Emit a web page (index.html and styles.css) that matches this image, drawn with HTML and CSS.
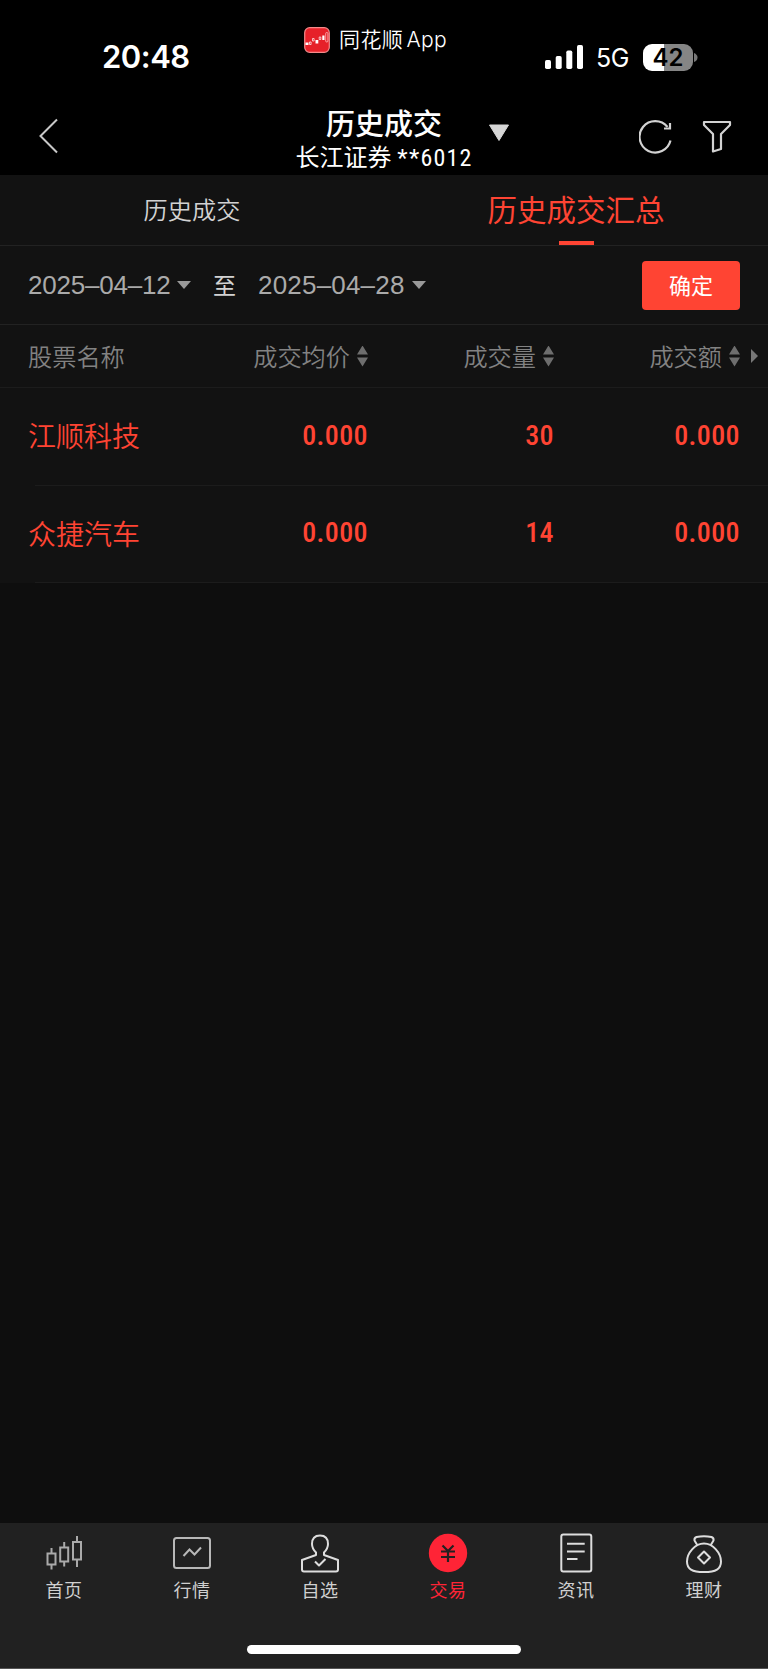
FILE: index.html
```html
<!DOCTYPE html>
<html lang="zh-CN">
<head>
    <meta charset="UTF-8" />
    <meta name="viewport" content="width=device-width, initial-scale=1.0" />
    <title>历史成交汇总</title>
    <link rel="stylesheet" href="styles.css">
</head>
<body>
    <header>
        <div class="status-bar">
            <div class="time">20:48</div>
            <div class="source-app">
                <svg class="app-logo" width="26" height="26" viewBox="0 0 26 26">
                    <rect x="0.7" y="0.7" width="24.6" height="24.6" rx="5" fill="#e62129" stroke="#f58a8a" stroke-width="1.2"/>
                    <path d="M1.5 15.5h3v2.500h-3zM11.500 13h2.800v3.500h-2.800zM18.300 8.500h2.200v4.500h-2.200z" fill="#fff"/>
                    <path d="M5.500 15h1.600v2.500h-1.600zM8.500 11.500h1.600v2.500h-1.600zM15.200 10h1.600v2.500h-1.600z" fill="none" stroke="#fff" stroke-width="0.7"/>
                    <rect x="21.700" y="5.500" width="2.200" height="9.500" rx="1" fill="none" stroke="#ffd0d0" stroke-width="0.7"/>
                </svg>
                <span>同花顺 App</span>
            </div>
            <div class="signals">
                <svg width="38" height="24" viewBox="0 0 38 24" fill="#fff">
                    <rect x="0" y="15" width="6" height="9" rx="1.700"/>
                    <rect x="10.700" y="11" width="6" height="13" rx="1.700"/>
                    <rect x="21.300" y="5.500" width="6" height="18.500" rx="1.700"/>
                    <rect x="32" y="0" width="6" height="24" rx="1.700"/>
                </svg>
                <span class="network">5G</span>
                <div class="battery"><span>42</span></div>
                <svg class="battery-cap" width="4" height="9" viewBox="0 0 4 9"><path d="M0 0Q3.500 1.500 3.500 4.500T0 9z" fill="#777"/></svg>
            </div>
        </div>
        <div class="nav-bar">
            <svg class="back" width="20" height="36" viewBox="0 0 20 36"><path d="M18 1.500L1.500 18L18 34.500" fill="none" stroke="#c8c8c8" stroke-width="2"/></svg>
            <div class="title">
                <h1>历史成交</h1>
                <div class="account">长江证券 <span>**6012</span></div>
            </div>
            <svg class="title-arrow" width="22" height="18" viewBox="0 0 22 18"><path d="M1.500 1h19L11 16.500z" fill="#d6d6d6" stroke="#d6d6d6" stroke-linejoin="round"/></svg>
            <svg class="refresh" width="34" height="36" viewBox="0 0 34 36" fill="none" stroke="#d2d2d2" stroke-width="2.200">
                <path d="M31.500 21.500A15.700 15.700 0 1 1 28.500 8"/>
                <path d="M31 4V9.500H25"/>
            </svg>
            <svg class="filter" width="30" height="34" viewBox="0 0 30 34"><path d="M2 2H28V5L19 14V29L11 31.500V14L2 5Z" fill="none" stroke="#d2d2d2" stroke-width="2.200" stroke-linejoin="round"/></svg>
        </div>
    </header>

    <main>
        <nav class="tabs">
            <a class="tab">历史成交</a>
            <a class="tab active">历史成交汇总</a>
        </nav>

        <div class="date-bar">
            <span class="date">2025–04–12</span>
            <i class="caret"></i>
            <span class="to">至</span>
            <span class="date">2025–04–28</span>
            <i class="caret"></i>
            <button>确定</button>
        </div>

        <div class="row table-head">
            <div class="name">股票名称</div>
            <div class="cell"><span>成交均价</span><i class="sort"></i></div>
            <div class="cell"><span>成交量</span><i class="sort"></i></div>
            <div class="cell"><span>成交额</span><i class="sort"></i></div>
            <i class="more"></i>
        </div>
        <div class="row stock">
            <div class="name">江顺科技</div>
            <div class="cell">0.000</div>
            <div class="cell">30</div>
            <div class="cell">0.000</div>
        </div>
        <div class="row stock">
            <div class="name">众捷汽车</div>
            <div class="cell">0.000</div>
            <div class="cell">14</div>
            <div class="cell">0.000</div>
        </div>
    </main>

    <footer>
        <div class="tab-bar">
            <a>
                <svg width="40" height="40" viewBox="0 0 40 40" fill="none" stroke="#aaa" stroke-width="2">
                    <path d="M3.500 20.500h8v11h-8zM7.500 15v5.500M7.500 31.500v5M16.200 14.500h8v14h-8zM20.200 9v5.500M20.200 28.500v5M29 9h8v17.500h-8zM33 3v6M33 26.500V34"/>
                </svg>
                <span>首页</span>
            </a>
            <a>
                <svg width="40" height="40" viewBox="0 0 40 40" fill="none" stroke="#b8b8b8" stroke-width="2">
                    <rect x="2" y="5" width="36" height="30" rx="2.500"/>
                    <path d="M11.500 23L17.500 16.500L22.500 21.500L29 14.500"/>
                </svg>
                <span>行情</span>
            </a>
            <a>
                <svg width="40" height="40" viewBox="0 0 40 40" fill="none" stroke="#ddd" stroke-width="2" stroke-linejoin="round">
                    <path d="M16 22V19.500C13.500 17 12 14 12 11C12 5.500 15 2.500 20 2.500S28 5.500 28 11C28 14 26.500 17 24 19.500V22L38 27V36.500Q38 38.500 36 38.500H4Q2 38.500 2 36.500V27Z"/>
                    <path d="M15 28.500L19 32.500L25.500 26"/>
                </svg>
                <span>自选</span>
            </a>
            <a class="active">
                <svg width="40" height="40" viewBox="0 0 40 40" fill="none">
                    <circle cx="20" cy="20" r="19.200" fill="#ff2436"/>
                    <path d="M14.500 12.500L20 18L25.500 12.500M20 18V29M13 18.500H27M13 24H27" stroke="#242021" stroke-width="2.200"/>
                </svg>
                <span>交易</span>
            </a>
            <a>
                <svg width="40" height="40" viewBox="0 0 40 40" fill="none" stroke="#ddd" stroke-width="2">
                    <rect x="5.300" y="1.500" width="30" height="37" rx="2"/>
                    <path d="M11 10.800H28.700M11 18.500H28.700M11 26H21.500"/>
                </svg>
                <span>资讯</span>
            </a>
            <a>
                <svg width="40" height="40" viewBox="0 0 40 40" fill="none" stroke="#ddd" stroke-width="2" stroke-linejoin="round">
                    <path d="M13.500 12.500L10.500 7.500Q10 5 12.500 4Q20 2.500 27.500 4Q30 5 29.500 7.500L26.500 12.500"/>
                    <path d="M20 10.500C11 10.500 3 20 3 28.500C3 36 8 39 20 39S37 36 37 28.500C37 20 29 10.500 20 10.500Z"/>
                    <path d="M20 18.500L26 24.500L20 30.500L14 24.500Z"/>
                </svg>
                <span>理财</span>
            </a>
        </div>
        <div class="home-indicator"></div>
    </footer>
</body>
</html>
```

FILE: styles.css
```css
* {
    box-sizing: border-box;
}

body {
    margin: 0;
    height: 1669px;
    display: flex;
    flex-direction: column;
    background-color: #0e0e0e;
    color: #d2d2d2;
    font-family: Inter, "Noto Sans CJK SC", sans-serif;
}

svg {
    display: block;
    flex: none;
}

header {
    height: 175px;
    background-color: #000;
    color: #fff;
}

/* Status bar */
.status-bar {
    display: flex;
    align-items: flex-start;
    height: 100px;
}

.time {
    width: 202px;
    margin-left: 102px;
    padding-top: 37px;
    font-size: 31px;
    line-height: 40px;
    font-weight: 600;
    letter-spacing: -0.5px;
}

.source-app {
    display: flex;
    align-items: center;
    width: 241px;
    padding-top: 26px;
    font-size: 21px;
    line-height: 28px;
    font-weight: 350;
    word-spacing: -3px;
    white-space: nowrap;
}

.source-app span {
    margin-left: 9px;
    letter-spacing: 0.4px;
}

.signals {
    display: flex;
    align-items: center;
    padding-top: 43px;
}

.network {
    width: 34px;
    margin: 2px 13px 0 13px;
    font-size: 25px;
    line-height: 26px;
    letter-spacing: -0.5px;
}

.battery {
    width: 50px;
    height: 27px;
    border-radius: 9px;
    background: linear-gradient(90deg, #fff 42%, #858585 42%);
    color: #000;
    font-size: 24px;
    line-height: 27px;
    font-weight: 600;
    text-align: center;
}

.battery-cap {
    margin-left: 1px;
}

/* Navigation bar */
.nav-bar {
    display: flex;
    height: 75px;
}

.back {
    margin: 18px 0 0 39px;
}

.title {
    width: 190px;
    margin-left: 230px;
    text-align: center;
    font-family: Roboto, "Noto Sans CJK SC", sans-serif;
}

h1 {
    margin: 7px 0 0;
    font-size: 29px;
    line-height: 36px;
    font-weight: 500;
}

.account {
    font-size: 24px;
    line-height: 31px;
    white-space: nowrap;
}

.account span {
    font-stretch: 80%;
    letter-spacing: 1.2px;
}

.title-arrow {
    margin: 24px 0 0 9px;
}

.refresh {
    margin: 19px 0 0 129px;
}

.filter {
    margin: 20px 0 0 29px;
}

/* Top tabs */
main {
    flex: 1;
}

.tabs {
    display: flex;
    height: 71px;
    background-color: #121212;
    border-bottom: 1px solid #222;
}

.tab {
    flex: 1;
    display: flex;
    flex-direction: column;
    align-items: center;
    font-size: 24.2px;
    line-height: 72px;
    font-weight: 350;
}

.tab.active {
    color: #ff4433;
    font-size: 29.5px;
    line-height: 70px;
    font-weight: 400;
}

.tab.active::after {
    content: "";
    width: 35px;
    height: 4px;
    margin-top: -4px;
    background-color: #ff4433;
}

/* Date range */
.date-bar {
    display: flex;
    align-items: center;
    height: 79px;
    padding: 0 28px;
    background-color: #121212;
    border-bottom: 1px solid #222;
}

.date {
    color: #aaa;
    width: 142px;
    font-family: "Liberation Sans", sans-serif;
    font-size: 26px;
    line-height: 30px;
    letter-spacing: -0.2px;
    white-space: nowrap;
}

.to + .date {
    width: 147px;
    letter-spacing: 0.2px;
}

.caret {
    margin-left: 7px;
    border: 7px solid transparent;
    border-top: 8px solid #999;
    border-bottom: 0;
}

.to {
    margin: -2px 22px 0 22px;
    font-size: 23px;
}

button {
    width: 98px;
    height: 49px;
    margin-left: auto;
    padding: 0 0 2px;
    border: none;
    border-radius: 4px;
    background-color: #ff4433;
    color: #fff;
    font-family: inherit;
    font-size: 22px;
}

/* Table */
.row {
    display: flex;
    align-items: center;
    padding-left: 28px;
    background-color: #121212;
}

.name {
    width: 155px;
}

.cell {
    display: flex;
    align-items: center;
    justify-content: flex-end;
    width: 186px;
}

.name + .cell {
    width: 185px;
}

.table-head {
    height: 63px;
    border-bottom: 1px solid #1c1c1c;
    color: #828282;
    font-size: 24.2px;
    font-weight: 350;
}

.table-head .name,
.table-head span {
    padding-bottom: 2px;
}

.sort {
    width: 11px;
    height: 21px;
    margin: 0 0 0 7px;
    background-color: #6e6e6e;
    clip-path: polygon(50% 0, 100% 9px, 0 9px, 0 12px, 100% 12px, 50% 100%, 0 12px, 0 9px);
}

.more {
    margin-left: 11px;
    border: 7px solid transparent;
    border-left-color: #777;
    border-right: 0;
}

.stock {
    position: relative;
    height: 97.5px;
    padding-bottom: 3px;
    color: #ff4433;
    font-size: 28px;
    font-weight: 350;
}

.stock::after {
    content: "";
    position: absolute;
    left: 35px;
    right: 0;
    bottom: 0;
    height: 1px;
    background-color: #1c1c1c;
}

.stock .cell {
    font-family: Roboto, sans-serif;
    font-stretch: 80%;
    font-weight: 500;
    letter-spacing: 0.4px;
}

/* Bottom tab bar */
footer {
    height: 146px;
    padding-top: 10px;
    background-color: #212121;
    border-bottom: 1px solid #555;
}

.tab-bar {
    display: flex;
    height: 112px;
}

.tab-bar a {
    flex: 1;
    display: flex;
    flex-direction: column;
    align-items: center;
    color: #d0d0d0;
    font-size: 18px;
    line-height: 26px;
    letter-spacing: 0.5px;
}

.tab-bar span {
    margin-top: 5px;
}

.tab-bar .active {
    color: #ff2436;
}

.home-indicator {
    width: 274px;
    height: 9px;
    margin: 0 auto;
    border-radius: 5px;
    background-color: #fff;
}
```
